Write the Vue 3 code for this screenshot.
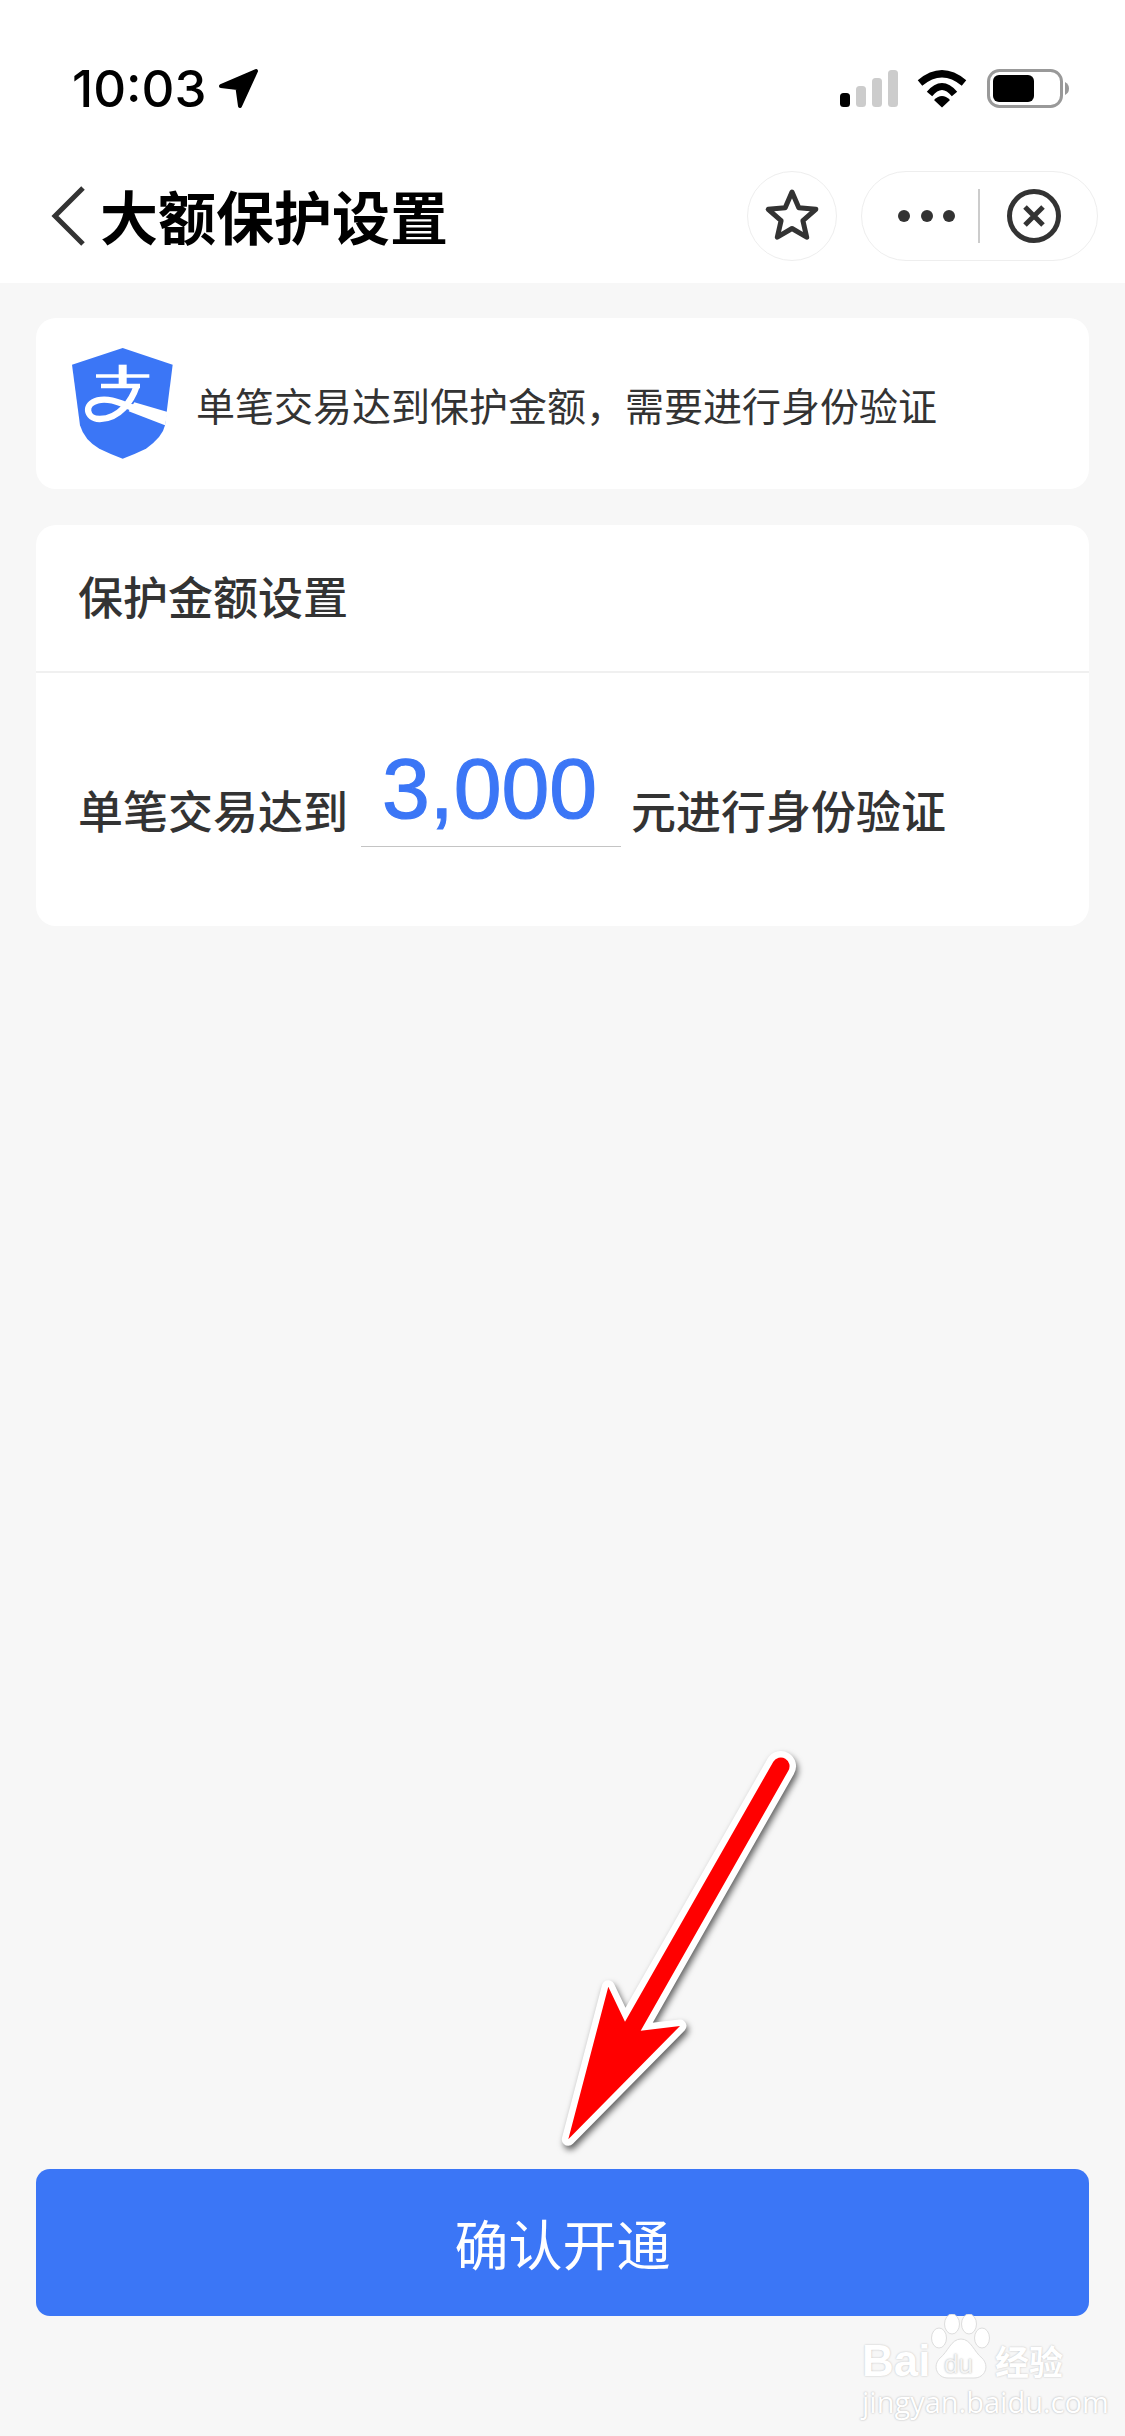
<template>
  <div class="page">
    <header class="top">
      <div class="status-bar">
        <div class="clock">
          <span class="time">10:03</span>
          <svg class="loc" width="42" height="42" viewBox="0 0 42 42">
            <path d="M3 18 L38 3 L22 38 L19.5 20 Z" fill="#000" stroke="#000" stroke-width="4" stroke-linejoin="round" />
          </svg>
        </div>
        <svg class="status-icons" width="229" height="40" viewBox="0 0 229 40">
          <rect x="0" y="24" width="10" height="14" rx="3.5" fill="#000" />
          <rect x="16" y="17" width="10" height="21" rx="3.5" fill="#ccc" />
          <rect x="32" y="9" width="10" height="29" rx="3.5" fill="#ccc" />
          <rect x="48" y="1" width="10" height="37" rx="3.5" fill="#ccc" />
          <path d="M80 14 Q102 -4.5 124 14" fill="none" stroke="#000" stroke-width="7" />
          <path d="M89.5 25 Q102 10 114.500 25" fill="none" stroke="#000" stroke-width="7" />
          <path d="M94 31 Q102 23 110 31 L102 38.500 Z" fill="#000" />
          <rect x="148.500" y="1.500" width="73" height="36" rx="11" fill="none" stroke="#999" stroke-width="3" />
          <rect x="153" y="6" width="41" height="27" rx="6" fill="#000" />
          <path d="M225 13 Q229 15 229 19.500 Q229 24 225 26 Z" fill="#999" />
        </svg>
      </div>
      <nav class="nav">
        <svg class="back" width="36" height="60" viewBox="0 0 36 60">
          <path d="M33 2 L5 30 L33 58" fill="none" stroke="#333" stroke-width="5" />
        </svg>
        <h1 class="title">大额保护设置</h1>
        <div class="star-btn">
          <svg width="60" height="60" viewBox="0 0 60 60">
            <path d="M30 6 L36.800 21.700 L53.800 23.300 L40.900 34.600 L44.700 51.200 L30 42.500 L15.300 51.200 L19.100 34.600 L6.200 23.300 L23.200 21.700 Z"
              fill="none" stroke="#333" stroke-width="5" stroke-linejoin="round" />
          </svg>
        </div>
        <div class="capsule">
          <div class="dots"><i></i><i></i><i></i></div>
          <div class="capsule-line"></div>
          <div class="close">
            <svg width="56" height="56" viewBox="0 0 56 56">
              <circle cx="28" cy="28" r="24.500" fill="none" stroke="#333" stroke-width="5" />
              <path d="M19 19 L37 37 M37 19 L19 37" fill="none" stroke="#333" stroke-width="5" />
            </svg>
          </div>
        </div>
      </nav>
    </header>

    <main class="content">
      <section class="card notice">
        <svg class="shield" width="114" height="124" viewBox="0 0 342 372">
          <path d="M170 18 L320 68 L297 250 Q290 285 240 320 Q205 337 170 350 Q135 337 100 320 Q55 295 42 250 L18 68 Z" fill="#3b76f6" />
          <path d="M90 102 L250 102" fill="none" stroke="#fff" stroke-width="11" />
          <path d="M170 68 L170 130" fill="none" stroke="#fff" stroke-width="24" />
          <path d="M105 132 L222 132" fill="none" stroke="#fff" stroke-width="13" />
          <path d="M212 132 C198 175 160 232 100 231 C60 230 52 186 95 175 C135 165 175 190 210 200"
            fill="none" stroke="#fff" stroke-width="19" />
          <path d="M205 181 L305 210 L297 250 L188 208 Z" fill="#fff" />
        </svg>
        <p class="notice-text">单笔交易达到保护金额，需要进行身份验证</p>
      </section>

      <section class="card settings">
        <div class="settings-head">保护金额设置</div>
        <div class="settings-body">
          <span class="label">单笔交易达到</span>
          <span class="amount">3,000</span>
          <span class="label">元进行身份验证</span>
        </div>
      </section>

      <button class="confirm">确认开通</button>
    </main>

    <!-- 标注箭头 -->
    <svg class="arrow" width="1125" height="2436" viewBox="0 0 1125 2436">
      <path d="M773.300 1761.700 A8.700 8.700 0 0 1 788.300 1770.700 L640.700 2030.700 L680 2026 L568.300 2139.300 L608.300 1986.700 L625 2021.700 Z"
        fill="#f00" stroke="#fff" stroke-width="13" stroke-linejoin="round" paint-order="stroke" />
    </svg>

    <!-- 水印 -->
    <div class="watermark">
      <div class="wm-top">
        <span class="wm-bai">Bai</span>
        <span class="wm-paw">
          <svg width="62" height="66" viewBox="0 0 62 66">
            <ellipse cx="9" cy="24" rx="7.500" ry="10" fill="#fff" stroke="#ddd" />
            <ellipse cx="22" cy="10" rx="7.500" ry="10" fill="#fff" stroke="#ddd" />
            <ellipse cx="39" cy="10" rx="7.500" ry="10" fill="#fff" stroke="#ddd" />
            <ellipse cx="52" cy="24" rx="7.500" ry="10" fill="#fff" stroke="#ddd" />
            <path d="M31 25 C41 25 44 38 52 44 C60 52 55 64 44 64 L18 64 C7 64 2 52 10 44 C18 38 21 25 31 25 Z" fill="#fff" stroke="#ddd" />
          </svg>
          <em>du</em>
        </span>
        <span class="wm-cn">经验</span>
      </div>
      <div class="wm-url">jingyan.baidu.com</div>
    </div>
  </div>
</template>

<script setup>
</script>

<style scoped>
.page {
  position: relative;
  width: 1125px;
  height: 2436px;
  overflow: hidden;
  background: #f7f7f7;
  display: flex;
  flex-direction: column;
  font-family: "Noto Sans CJK SC", "Liberation Sans", sans-serif;
  color: #333;
}

.top {
  background: #fff;
  height: 283px;
  box-sizing: border-box;
}

.status-bar {
  height: 171px;
  box-sizing: border-box;
  padding: 64px 56px 0 72px;
  display: flex;
  justify-content: space-between;
  align-items: flex-start;
}

.clock {
  display: flex;
  align-items: center;
  height: 50px;
}

.time {
  font-family: Inter, "Liberation Sans", sans-serif;
  font-size: 51px;
  font-weight: 500;
  line-height: 50px;
  color: #000;
}

.loc {
  margin-left: 12px;
}

.status-icons {
  margin-top: 5px;
}

.nav {
  display: flex;
  align-items: center;
  height: 90px;
  padding: 0 27px 0 50px;
}

.title {
  margin: -3px 0 0 14px;
  flex: 1;
  font-size: 58px;
  font-weight: 700;
  line-height: 90px;
  color: #000;
}

.star-btn {
  width: 90px;
  height: 90px;
  box-sizing: border-box;
  border: 1.5px solid #eee;
  border-radius: 50%;
  display: flex;
  align-items: center;
  justify-content: center;
  margin-right: 24px;
}

.capsule {
  width: 237px;
  height: 90px;
  box-sizing: border-box;
  border: 1.5px solid #eee;
  border-radius: 45px;
  display: flex;
  align-items: center;
}

.dots {
  width: 116px;
  padding-left: 13px;
  box-sizing: border-box;
  display: flex;
  justify-content: center;
  gap: 10.500px;
}

.dots i {
  width: 12px;
  height: 12px;
  background: #333;
  border-radius: 50%;
}

.capsule-line {
  width: 1.500px;
  height: 54px;
  background: #ccc;
}

.close {
  flex: 1;
  display: flex;
  justify-content: center;
  padding-right: 8px;
}

.content {
  flex: 1;
  display: flex;
  flex-direction: column;
  gap: 36px;
  padding: 35px 36px 120px;
}

.card {
  background: #fff;
  border-radius: 20px;
}

.notice {
  height: 171px;
  display: flex;
  align-items: center;
  padding-left: 30px;
}

.shield {
  flex: none;
}

.notice-text {
  margin: 0 0 0 16px;
  font-size: 39px;
  line-height: 60px;
  color: #333;
}

.settings {
  height: 401px;
}

.settings-head {
  height: 148px;
  box-sizing: border-box;
  border-bottom: 2px solid #f0f0f0;
  padding-left: 42px;
  font-size: 45px;
  font-weight: 500;
  line-height: 141px;
}

.settings-body {
  display: flex;
  align-items: flex-end;
  padding: 74px 0 0 42px;
}

.label {
  font-size: 45px;
  font-weight: 500;
  line-height: 60px;
  margin-bottom: 7px;
}

.amount {
  width: 260px;
  height: 100px;
  box-sizing: border-box;
  margin: 0 10px 0 13px;
  border-bottom: 1.500px solid #c4c4c4;
  text-align: center;
  font-family: "Liberation Sans", Arial, sans-serif;
  font-size: 86px;
  font-weight: 400;
  line-height: 82px;
  -webkit-text-stroke: 1.2px #3b76f6;
  color: #3b76f6;
  text-indent: -3px;
}

.confirm {
  margin-top: auto;
  height: 147px;
  border: none;
  border-radius: 14px;
  background: #3b76f6;
  color: #fff;
  font-family: "Noto Sans CJK SC", sans-serif;
  font-size: 54px;
  font-weight: 400;
}

.arrow {
  position: absolute;
  left: 0;
  top: 0;
  filter: drop-shadow(2px 4px 3px rgba(0, 0, 0, 0.6));
  pointer-events: none;
}

.watermark {
  position: absolute;
  left: 862px;
  top: 2316px;
  width: 204px;
  color: #fff;
}

.wm-top {
  display: flex;
  align-items: flex-end;
  height: 64px;
}

.wm-bai {
  font-family: "Liberation Sans", sans-serif;
  font-size: 44px;
  font-weight: 700;
  line-height: 38px;
  width: 68px;
  text-shadow: 0 0 2px #bbb;
}

.wm-paw {
  position: relative;
  width: 62px;
  height: 66px;
}

.wm-paw em {
  position: absolute;
  left: 14px;
  top: 37px;
  font-family: "Liberation Sans", sans-serif;
  font-style: normal;
  font-size: 26px;
  line-height: 26px;
  color: #f4f4f4;
  text-shadow: 0 0 2px #aaa;
}

.wm-cn {
  margin-left: 3px;
  font-size: 34px;
  font-weight: 700;
  line-height: 38px;
  text-shadow: 0 0 2px #bbb;
}

.wm-url {
  margin-top: 7px;
  font-family: "Open Sans", "Liberation Sans", sans-serif;
  font-size: 29px;
  line-height: 30px;
  white-space: nowrap;
  text-shadow: 0 0 2px #aaa;
}
</style>
